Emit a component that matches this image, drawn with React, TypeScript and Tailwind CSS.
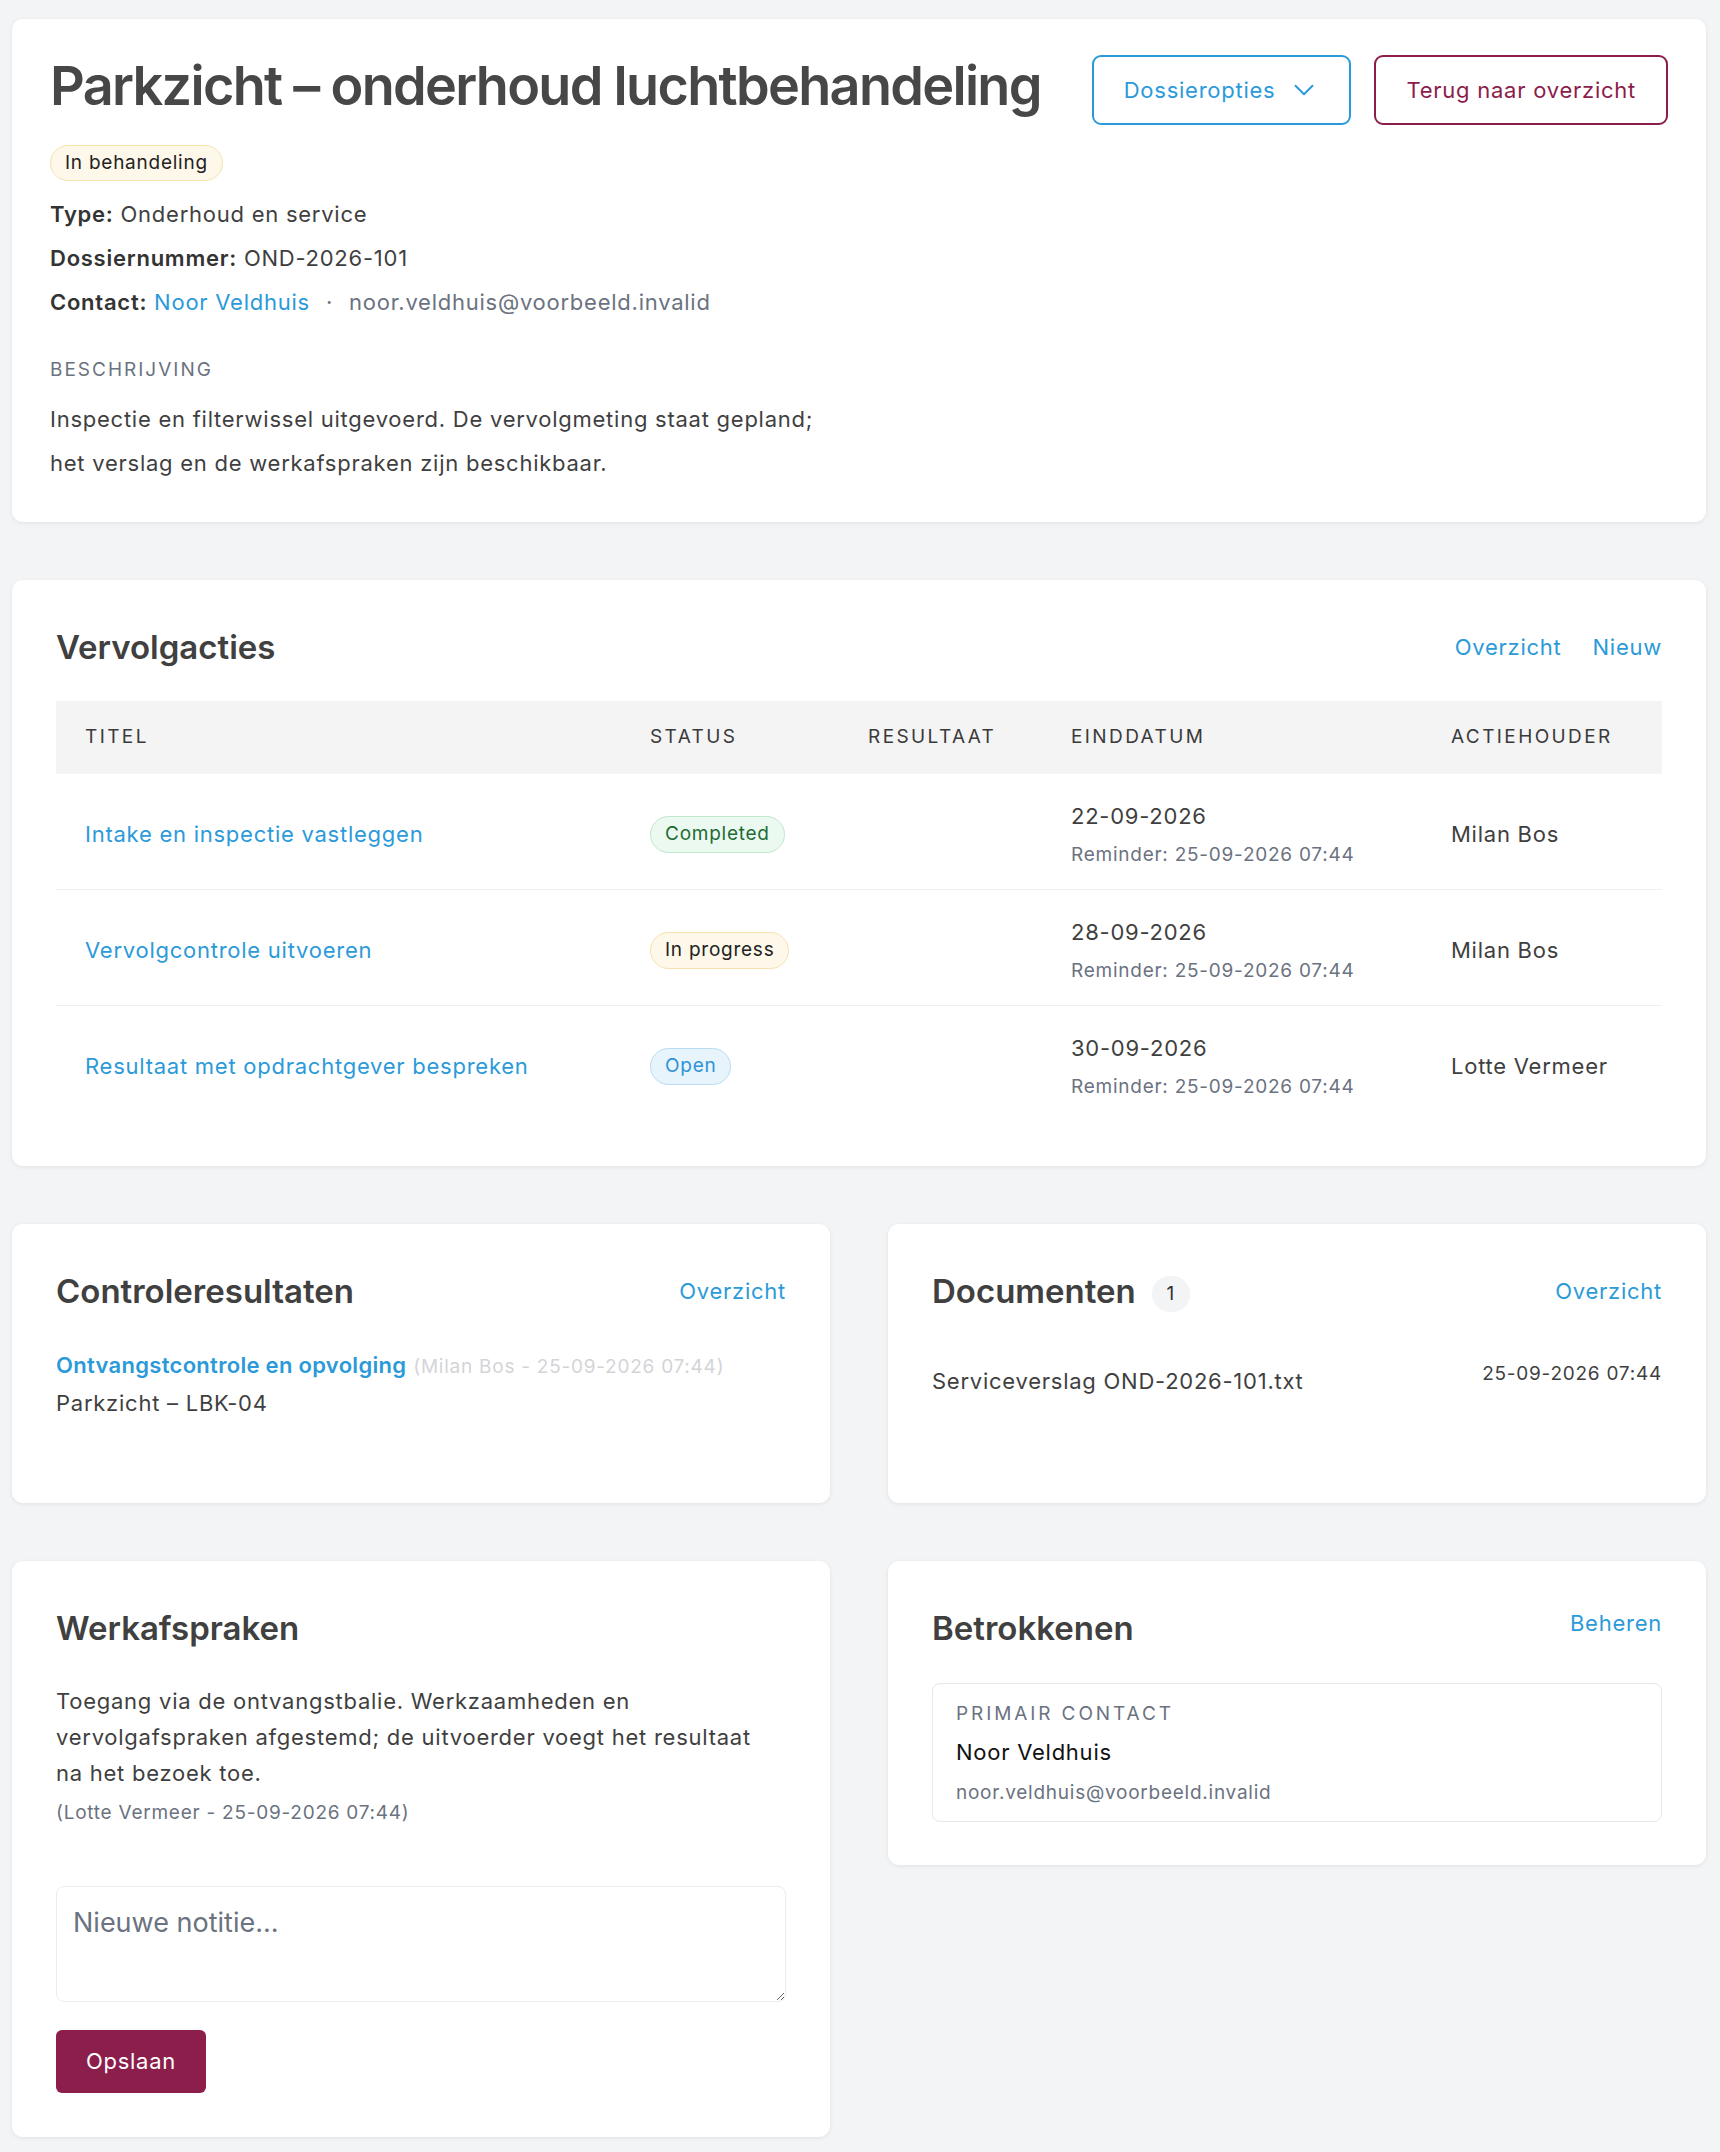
import { ChevronDown } from 'lucide-react';

const font = { fontFamily: 'Inter, "Noto Sans", sans-serif' };

type Action = {
  title: string;
  status: 'Completed' | 'In progress' | 'Open';
  date: string;
  owner: string;
};

const actions: Action[] = [
  { title: 'Intake en inspectie vastleggen', status: 'Completed', date: '22-09-2026', owner: 'Milan Bos' },
  { title: 'Vervolgcontrole uitvoeren', status: 'In progress', date: '28-09-2026', owner: 'Milan Bos' },
  { title: 'Resultaat met opdrachtgever bespreken', status: 'Open', date: '30-09-2026', owner: 'Lotte Vermeer' },
];

function StatusBadge({ status }: { status: Action['status'] }) {
  const styles = {
    Completed: 'bg-[#ecf9f0] border-[#bfe8cc] text-[#1d6b35]',
    'In progress': 'bg-[#fdf8ea] border-[#f5e2ad] text-[#222]',
    Open: 'bg-[#e8f4fc] border-[#b8dcf3] text-[#2b93d6]',
  }[status];
  return (
    <span className={`inline-flex items-center h-[37px] px-[14px] rounded-full border text-[19px] ${styles}`}>
      {status}
    </span>
  );
}

const card = 'bg-white rounded-[11px] shadow-[0_1px_4px_rgba(0,0,0,0.08)]';

export default function App() {
  return (
    <div className="min-h-screen bg-[#f3f4f6] text-[#3f3f3f] tracking-[0.75px]" style={font}>
      <div className="pl-[12px] pr-[14px] pt-[19px] pb-[15px] flex flex-col gap-[58px]">
        {/* Dossier header */}
        <div className={`${card} px-[38px] pt-[36px] pb-[37px]`}>
          <div className="flex justify-between items-start">
            <h1 className="text-[54px] font-semibold leading-[1.15] text-[#474747] tracking-[-1.7px]">
              Parkzicht – onderhoud luchtbehandeling
            </h1>
            <div className="flex gap-[23px]">
              <button className="h-[70px] border-2 border-[#2b9ad9] rounded-[9px] pl-[30px] pr-[28px] text-[22px] text-[#2b9ad9] flex items-center gap-[12px]">
                Dossieropties
                <ChevronDown size={34} strokeWidth={1.4} />
              </button>
              <button className="h-[70px] border-2 border-[#8b1d4a] rounded-[9px] px-[30px] text-[22px] text-[#8b1d4a]">
                Terug naar overzicht
              </button>
            </div>
          </div>
          <span className="mt-[20px] inline-flex items-center h-[36px] px-[14px] rounded-full border border-[#f5e2ad] bg-[#fdf8ea] text-[19px] text-[#222]">
            In behandeling
          </span>
          <div className="mt-[17px] flex flex-col gap-[11px] text-[22px] leading-[33px]">
            <div>
              <span className="font-semibold text-[#333]">Type:</span> Onderhoud en service
            </div>
            <div>
              <span className="font-semibold text-[#333]">Dossiernummer:</span> OND-2026-101
            </div>
            <div>
              <span className="font-semibold text-[#333]">Contact:</span>{' '}
              <span className="text-[#2b9ad9]">Noor Veldhuis</span>
              <span className="text-[#6b7280] mx-[16px]">·</span>
              <span className="text-[#6b7280]">noor.veldhuis@voorbeeld.invalid</span>
            </div>
          </div>
          <div className="mt-[37px] text-[19px] leading-[28px] uppercase tracking-[2px] text-[#6b7280]">
            Beschrijving
          </div>
          <p className="mt-[13px] text-[22px] leading-[44px] text-[#3f3f3f]">
            Inspectie en filterwissel uitgevoerd. De vervolgmeting staat gepland;
            <br />
            het verslag en de werkafspraken zijn beschikbaar.
          </p>
        </div>

        {/* Vervolgacties */}
        <div className={`${card} px-[44px] pt-[46px] pb-[45px]`}>
          <div className="flex justify-between items-center">
            <h2 className="text-[33px] font-semibold leading-[1.3] text-[#404040] tracking-normal">Vervolgacties</h2>
            <div className="flex gap-[31px] text-[22px] text-[#2b9ad9]">
              <a>Overzicht</a>
              <a>Nieuw</a>
            </div>
          </div>
          <div className="mt-[32px]">
            <div className="grid grid-cols-[565px_218px_203px_380px_1fr] h-[73px] items-center bg-[#f4f4f5] text-[19px] uppercase tracking-[2.4px] text-[#3a3a3a]">
              <div className="pl-[29px]">Titel</div>
              <div className="pl-[29px]">Status</div>
              <div className="pl-[29px]">Resultaat</div>
              <div className="pl-[29px]">Einddatum</div>
              <div className="pl-[29px]">Actiehouder</div>
            </div>
            {actions.map((a, i) => (
              <div
                key={a.title}
                className={`grid grid-cols-[565px_218px_203px_380px_1fr] items-center pt-[26px] pb-[20px] ${
                  i < actions.length - 1 ? 'border-b border-[#efefef]' : ''
                }`}
              >
                <div className="pl-[29px] text-[22px] text-[#2b9ad9]">{a.title}</div>
                <div className="pl-[29px]">
                  <StatusBadge status={a.status} />
                </div>
                <div className="pl-[29px]" />
                <div className="pl-[29px]">
                  <div className="text-[22px] leading-[33px] text-[#3f3f3f]">{a.date}</div>
                  <div className="mt-[8px] text-[19px] leading-[28px] text-[#6b7280]">
                    Reminder: 25-09-2026 07:44
                  </div>
                </div>
                <div className="pl-[29px] text-[22px] text-[#3f3f3f]">{a.owner}</div>
              </div>
            ))}
          </div>
        </div>

        {/* Controleresultaten + Documenten */}
        <div className="grid grid-cols-2 gap-[58px]">
          <div className={`${card} px-[44px] pt-[46px] pb-[44px] min-h-[279px]`}>
            <div className="flex justify-between items-center">
              <h2 className="text-[33px] font-semibold leading-[1.3] text-[#404040] tracking-normal">
                Controleresultaten
              </h2>
              <a className="text-[22px] text-[#2b9ad9]">Overzicht</a>
            </div>
            <div className="mt-[34px] text-[22px] leading-[36px]">
              <div>
                <span className="font-semibold text-[#2b9ad9] tracking-[0.3px]">Ontvangstcontrole en opvolging</span>{' '}
                <span className="text-[19px] text-[#d4d4d8]">(Milan Bos - 25-09-2026 07:44)</span>
              </div>
              <div className="text-[#3f3f3f]">Parkzicht – LBK-04</div>
            </div>
          </div>
          <div className={`${card} px-[44px] pt-[46px] pb-[44px] min-h-[279px]`}>
            <div className="flex justify-between items-center">
              <div className="flex items-center gap-[16px]">
                <h2 className="text-[33px] font-semibold leading-[1.3] text-[#404040] tracking-normal">Documenten</h2>
                <span className="mt-[6px] w-[38px] h-[36px] rounded-full bg-[#f3f4f6] flex items-center justify-center text-[19px] text-[#333]">
                  1
                </span>
              </div>
              <a className="text-[22px] text-[#2b9ad9]">Overzicht</a>
            </div>
            <div className="mt-[50px] flex justify-between items-start">
              <div className="text-[22px] leading-[36px] text-[#3f3f3f]">Serviceverslag OND-2026-101.txt</div>
              <div className="-mt-[3px] text-[19px] leading-[28px] text-[#3f3f3f]">25-09-2026 07:44</div>
            </div>
          </div>
        </div>

        {/* Werkafspraken + Betrokkenen */}
        <div className="grid grid-cols-2 gap-[58px] items-start">
          <div className={`${card} px-[44px] pt-[46px] pb-[44px]`}>
            <h2 className="text-[33px] font-semibold leading-[1.3] text-[#404040] tracking-normal">Werkafspraken</h2>
            <p className="mt-[33px] text-[22px] leading-[36px] text-[#3f3f3f]">
              Toegang via de ontvangstbalie. Werkzaamheden en
              <br />
              vervolgafspraken afgestemd; de uitvoerder voegt het resultaat
              <br />
              na het bezoek toe.
            </p>
            <div className="mt-[8px] text-[19px] leading-[28px] text-[#6b7280]">(Lotte Vermeer - 25-09-2026 07:44)</div>
            <textarea
              placeholder="Nieuwe notitie..."
              className="mt-[59px] block w-full h-[116px] border border-[#ececec] rounded-[8px] px-[16px] pt-[16px] text-[27px] leading-[40px] tracking-normal placeholder:text-[#6b7280] outline-none"
              style={font}
            />
            <button className="mt-[28px] h-[63px] w-[150px] rounded-[6px] bg-[#8b1e4b] text-white text-[22px]">
              Opslaan
            </button>
          </div>
          <div className={`${card} px-[44px] pt-[46px] pb-[43px]`}>
            <div className="flex justify-between items-start">
              <h2 className="text-[33px] font-semibold leading-[1.3] text-[#404040] tracking-normal">Betrokkenen</h2>
              <a className="text-[22px] leading-[33px] text-[#2b9ad9]">Beheren</a>
            </div>
            <div className="mt-[33px] border border-[#e5e7eb] rounded-[8px] px-[23px] pt-[16px] pb-[14px]">
              <div className="text-[19px] leading-[28px] uppercase tracking-[2.9px] text-[#6b7280]">Primair contact</div>
              <div className="mt-[8px] text-[22px] leading-[33px] text-[#111]">Noor Veldhuis</div>
              <div className="mt-[10px] text-[19px] leading-[28px] text-[#6b7280]">noor.veldhuis@voorbeeld.invalid</div>
            </div>
          </div>
        </div>
      </div>
    </div>
  );
}
